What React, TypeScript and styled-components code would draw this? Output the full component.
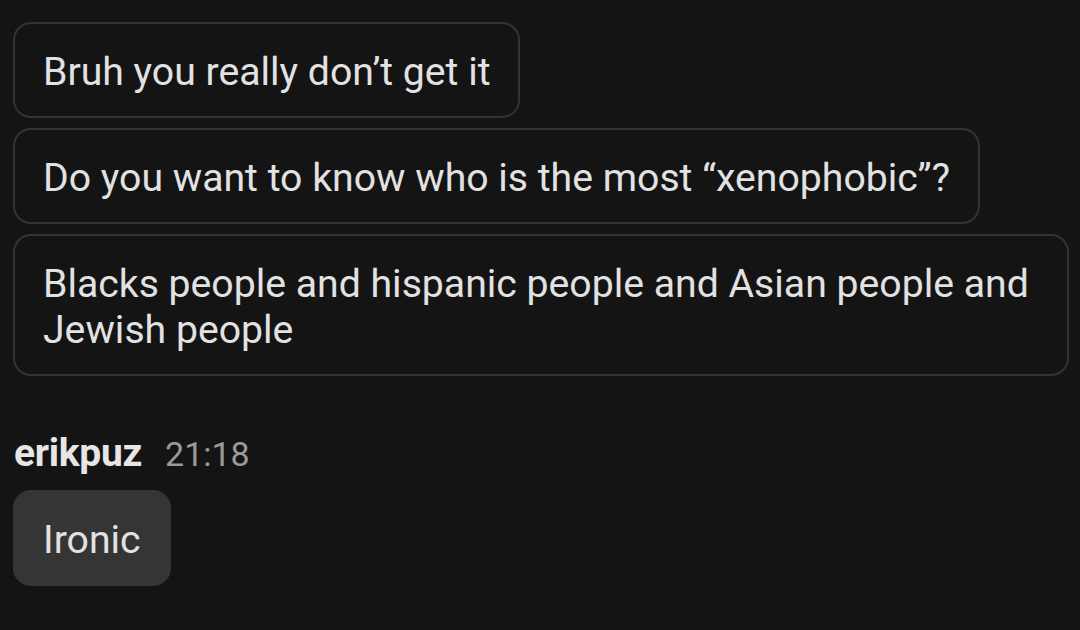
import React from "react";
import styled, { createGlobalStyle } from "styled-components";

const GlobalStyle = createGlobalStyle`
  html, body {
    margin: 0;
    padding: 0;
    background: #141414;
  }
  body {
    font-family: Roboto, "Liberation Sans", sans-serif;
    color: #e6e6e6;
  }
`;

const Page = styled.div`
  width: 1080px;
  height: 630px;
  overflow: hidden;
  background: #141414;
  padding: 22px 0 0 13px;
  box-sizing: border-box;
  display: flex;
  flex-direction: column;
`;

const Stack = styled.div`
  display: flex;
  flex-direction: column;
  align-items: flex-start;
  gap: 10px;
`;

const Bubble = styled.div<{ $filled?: boolean }>`
  box-sizing: border-box;
  max-width: 1056px;
  padding: 25px 28px 21px 28px;
  border-radius: 18px;
  border: 2px solid ${({ $filled }) => ($filled ? "#353535" : "#333333")};
  background: ${({ $filled }) => ($filled ? "#353535" : "#141414")};
  font-size: 39.2px;
  line-height: 46px;
  color: #e2e2e2;
`;

const Header = styled.div`
  display: flex;
  align-items: baseline;
  gap: 23px;
  margin: 54px 0 13px 1px;
  line-height: 46px;
`;

const Name = styled.span`
  font-size: 39px;
  font-weight: 700;
  color: #e6e6e6;
  letter-spacing: -0.3px;
`;

const Time = styled.span`
  font-size: 34px;
  color: #9a9a9a;
`;

export default function App() {
  return (
    <>
      <GlobalStyle />
      <Page>
        <Stack>
          <Bubble>Bruh you really don’t get it</Bubble>
          <Bubble>Do you want to know who is the most “xenophobic”?</Bubble>
          <Bubble>
            Blacks people and hispanic people and Asian people and Jewish people
          </Bubble>
        </Stack>
        <Header>
          <Name>erikpuz</Name>
          <Time>21:18</Time>
        </Header>
        <Stack>
          <Bubble $filled>Ironic</Bubble>
        </Stack>
      </Page>
    </>
  );
}
